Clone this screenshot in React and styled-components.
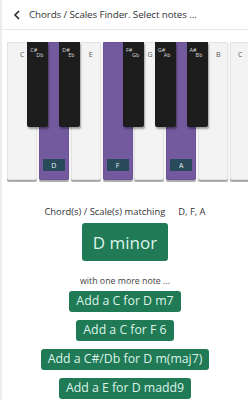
import React from "react";
import styled, { createGlobalStyle } from "styled-components";

const GlobalStyle = createGlobalStyle`
  html, body {
    margin: 0;
    padding: 0;
    background: #ffffff;
  }
  body {
    font-family: "Open Sans", "Noto Sans", sans-serif;
    color: #222;
  }
`;

const Page = styled.div`
  width: 248px;
  height: 400px;
  overflow: hidden;
  background: #fff;
  border-left: 2px solid #ececec;
  box-sizing: border-box;
`;

const Header = styled.header`
  height: 29px;
  display: flex;
  align-items: center;
  gap: 8px;
  padding-left: 11px;
  border-bottom: 1px solid #e6e6e6;
  font-size: 9.8px;
  color: #333;
  letter-spacing: -0.1px;
`;

const Back = styled.svg`
  width: 8px;
  height: 10px;
`;

const Piano = styled.div`
  position: relative;
  display: flex;
  margin: 12px 0 0 5px;
  height: 140px;
  overflow: hidden;
`;

const WhiteKey = styled.div`
  position: relative;
  flex: 0 0 30px;
  height: 138px;
  margin-right: 1.85px;
  background: ${p => (p.$on ? "#735a9f" : "#f3f3f3")};
  border: 1px solid ${p => (p.$on ? "#6a5294" : "#e2e2e2")};
  box-sizing: border-box;
  border-radius: 0 0 2px 2px;
  box-shadow: 0 2px 1px rgba(0, 0, 0, 0.35);
`;

const TopLabel = styled.span`
  position: absolute;
  top: 7px;
  font-size: 7px;
  color: #555;
`;

const NoteTag = styled.span`
  position: absolute;
  bottom: 8px;
  left: 50%;
  transform: translateX(-50%);
  width: 22px;
  height: 12px;
  background: #284a5a;
  color: #e8eef2;
  font-size: 7px;
  display: flex;
  align-items: center;
  justify-content: center;
`;

const BlackKey = styled.div`
  position: absolute;
  top: 0;
  width: 21px;
  height: 85px;
  background: #1d1d1d;
  border-radius: 0 0 2px 2px;
  box-shadow: 1px 2px 2px rgba(0, 0, 0, 0.35);
  color: #d8d8d8;
`;

const Sharp = styled.span`
  position: absolute;
  top: 4px;
  left: 3px;
  font-size: 5.5px;
`;

const Flat = styled.span`
  position: absolute;
  top: 9px;
  left: 9px;
  font-size: 5.5px;
`;

const Result = styled.section`
  display: flex;
  flex-direction: column;
  align-items: center;
  margin-top: 23px;
`;

const Matching = styled.p`
  margin: 0 0 5px;
  font-size: 9.4px;
  color: #333;

  span {
    margin-left: 13px;
  }
`;

const ChordButton = styled.button`
  font-family: inherit;
  border: none;
  border-radius: 3px;
  background: #1f7a55;
  color: #def3e8;
  font-size: ${p => (p.$big ? "17px" : "12.3px")};
  padding: ${p => (p.$big ? "0 11px" : "0 7px")};
  height: ${p => (p.$big ? "38px" : "21px")};
  line-height: 1;
  cursor: pointer;
`;

const More = styled.p`
  margin: 14px 0 4px;
  font-size: 8.8px;
  color: #444;
`;

const Suggestions = styled.div`
  display: flex;
  flex-direction: column;
  align-items: center;
  gap: 8px;
`;

const whites = [
  { n: "C", lx: 12 },
  { n: "D", on: true },
  { n: "E", lx: 17 },
  { n: "F", on: true },
  { n: "G", lx: 12 },
  { n: "A", on: true },
  { n: "B", lx: 17 },
  { n: "C", lx: 7 },
];

const blacks = [
  { at: 1, s: "C#", f: "Db" },
  { at: 2, s: "D#", f: "Eb" },
  { at: 4, s: "F#", f: "Gb" },
  { at: 5, s: "G#", f: "Ab" },
  { at: 6, s: "A#", f: "Bb" },
];

const STEP = 31.85;

const suggestions = [
  "Add a C for D m7",
  "Add a C for F 6",
  "Add a C#/Db for D m(maj7)",
  "Add a E for D madd9",
];

export default function App() {
  return (
    <Page>
      <GlobalStyle />
      <Header>
        <Back viewBox="0 0 8 10">
          <path d="M6 1 L2 5 L6 9" fill="none" stroke="#222" strokeWidth="1.5" />
        </Back>
        Chords / Scales Finder. Select notes ...
      </Header>

      <Piano>
        {whites.map((k, i) => (
          <WhiteKey key={i} $on={k.on}>
            {k.on ? <NoteTag>{k.n}</NoteTag> : <TopLabel style={{ left: k.lx }}>{k.n}</TopLabel>}
          </WhiteKey>
        ))}
        {blacks.map(b => (
          <BlackKey key={b.s} style={{ left: b.at * STEP - 11.5 }}>
            <Sharp>{b.s}</Sharp>
            <Flat>{b.f}</Flat>
          </BlackKey>
        ))}
      </Piano>

      <Result>
        <Matching>
          Chord(s) / Scale(s) matching<span>D, F, A</span>
        </Matching>
        <ChordButton $big>D minor</ChordButton>
        <More>with one more note ...</More>
        <Suggestions>
          {suggestions.map(s => (
            <ChordButton key={s}>{s}</ChordButton>
          ))}
        </Suggestions>
      </Result>
    </Page>
  );
}
